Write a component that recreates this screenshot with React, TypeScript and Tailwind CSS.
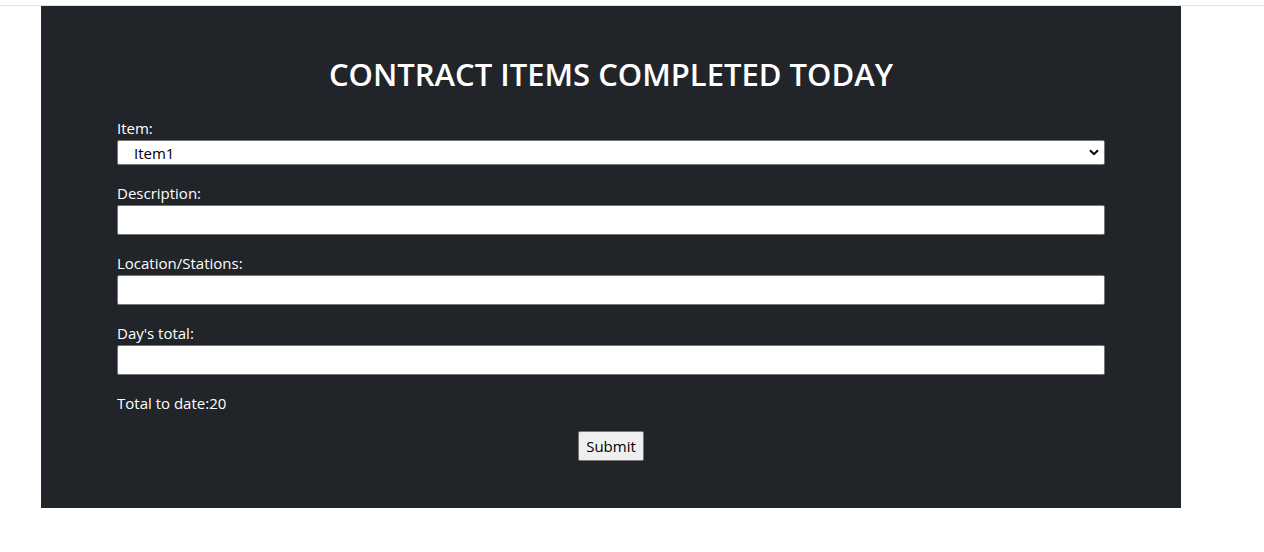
export default function App() {
    const fields = ["Description:", "Location/Stations:", "Day's total:"];

    return (
        <div className="min-h-screen bg-white font-['Open_Sans',sans-serif]">
            <div className="h-[6px] border-b border-[#e3e3e3]" />
            <div className="ml-[41px] w-[1140px] bg-[#212529] text-white pt-[46px] pb-[47px]">
                <h1 className="text-center text-[31px] leading-[45px] font-semibold mb-[19px]">
                    CONTRACT ITEMS COMPLETED TODAY
                </h1>

                <form className="px-[76px] flex flex-col" onSubmit={(e) => e.preventDefault()}>
                    <label className="text-[15px] leading-[24px]">Item:</label>
                    <div className="relative mb-[16px]">
                        <select className="w-full h-[25px] appearance-none bg-white text-black border border-[#767676] rounded-[2px] pl-[16px] text-[15px] leading-[20px]">
                            <option>Item1</option>
                            <option>Item2</option>
                        </select>
                        <svg
                            className="absolute right-[6px] top-[9px] pointer-events-none"
                            width="10"
                            height="7"
                            viewBox="0 0 10 7"
                        >
                            <path d="M1 1.2 L5 5.2 L9 1.2" fill="none" stroke="#000" strokeWidth="2" />
                        </svg>
                    </div>

                    {fields.map((f) => (
                        <div key={f} className="flex flex-col mb-[16px]">
                            <label className="text-[15px] leading-[24px]">{f}</label>
                            <input
                                type="text"
                                className="h-[30px] bg-white text-black border border-[#767676] rounded-[2px] px-[2px]"
                            />
                        </div>
                    ))}

                    <p className="text-[15px] leading-[24px] mb-[16px]">Total to date:20</p>

                    <div className="flex justify-center">
                        <button
                            type="submit"
                            className="h-[30px] px-[7px] bg-[#efefef] text-black border border-[#767676] rounded-[2px] text-[15px]"
                        >
                            Submit
                        </button>
                    </div>
                </form>
            </div>
        </div>
    );
}
